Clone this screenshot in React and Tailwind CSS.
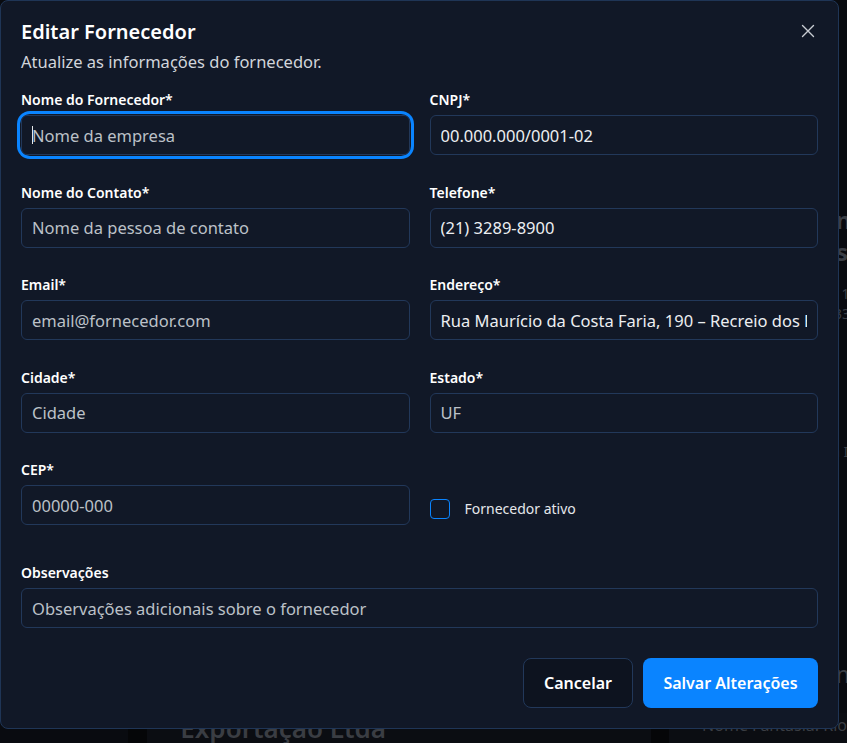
import React, { useState } from "react";

const font = { fontFamily: '"Noto Sans", "Open Sans", sans-serif' };

const inputClass =
  "block h-10 w-full rounded-md border border-[#22385a] bg-[#111827] px-[10px] text-[16.5px] text-[#eceef1] placeholder:text-[#bcc1c8] focus:outline-none";

const Field = ({ label, placeholder, value, focused }) => (
  <div>
    <label className="mb-[5px] block text-sm font-semibold leading-5 text-white">
      {label}
    </label>
    {focused ? (
      <div className="rounded-[9px] ring-[3px] ring-[#0a84ff] ring-offset-1 ring-offset-[#111827]">
        <div className="relative">
          <input className={inputClass} placeholder={placeholder} defaultValue={value} />
          <span className="absolute left-[11px] top-[11px] h-[18px] w-px bg-[#e5e7eb]" />
        </div>
      </div>
    ) : (
      <input className={inputClass} placeholder={placeholder} defaultValue={value} />
    )}
  </div>
);

const XIcon = () => (
  <svg width="14" height="14" viewBox="0 0 14 14" fill="none">
    <path d="M1.5 1.5L12.5 12.5M12.5 1.5L1.5 12.5" stroke="#c9cdd3" strokeWidth="1.4" strokeLinecap="round" />
  </svg>
);

const App = () => {
  const [active, setActive] = useState(false);

  return (
    <div className="relative h-[743px] w-[847px] overflow-hidden bg-[#090b10]" style={font}>
      {/* página ao fundo */}
      <div className="flex h-full flex-col">
        <div className="flex flex-col pl-[806px] pt-[204px] text-[#3b3f46]">
          <p className="text-2xl font-bold leading-8 whitespace-nowrap">Centro</p>
          <p className="text-2xl font-bold leading-8 whitespace-nowrap">Postos</p>
          <p className="mt-4 text-sm whitespace-nowrap">CNPJ 12.345</p>
          <p className="text-sm whitespace-nowrap">(21) 3333</p>
          <p className="mt-[118px] text-sm whitespace-nowrap">Nova Iguaçu</p>
          <p className="mt-[196px] text-2xl leading-8 whitespace-nowrap">Comércio</p>
        </div>
        <div className="mt-auto flex h-[30px] pl-[128px]">
          <div className="w-[20px] bg-[#050608]" />
          <div className="w-[521px] bg-[#0b0d12] pl-[33px]">
            <p className="text-[26px] font-semibold leading-[30px] text-[#3a3d43] whitespace-nowrap">
              Exportação Ltda
            </p>
          </div>
          <div className="w-[19px] bg-[#050608]" />
          <div className="flex-1 bg-[#0b0d12] pl-[33px]">
            <p className="text-base leading-6 text-[#3a3d43] whitespace-nowrap">Nome Fantasia: Rio</p>
          </div>
        </div>
      </div>

      {/* diálogo */}
      <div className="absolute left-0 top-0 flex h-[729px] w-[839px] flex-col rounded-lg border border-[#1f3556] bg-[#111827] px-5 pb-5 pt-[17px]">
        <div className="flex items-start justify-between">
          <div className="flex flex-col gap-1">
            <h2 className="text-xl font-semibold leading-7 text-white">Editar Fornecedor</h2>
            <p className="text-[16.5px] leading-6 text-[#d1d5db]">Atualize as informações do fornecedor.</p>
          </div>
          <button className="mr-[3px] mt-[6px]">
            <XIcon />
          </button>
        </div>

        <form className="mt-4 flex flex-1 flex-col" onSubmit={(e) => e.preventDefault()}>
          <div className="grid grid-cols-2 gap-x-5 gap-y-[27.5px]">
            <Field label="Nome do Fornecedor*" placeholder="Nome da empresa" focused />
            <Field label="CNPJ*" value="00.000.000/0001-02" />
            <Field label="Nome do Contato*" placeholder="Nome da pessoa de contato" />
            <Field label="Telefone*" value="(21) 3289-8900" />
            <Field label="Email*" placeholder="email@fornecedor.com" />
            <Field label="Endereço*" value="Rua Maurício da Costa Faria, 190 – Recreio dos Bandeirantes" />
            <Field label="Cidade*" placeholder="Cidade" />
            <Field label="Estado*" placeholder="UF" />
            <Field label="CEP*" placeholder="00000-000" />
            <label className="flex items-end pb-[6px]">
              <span className="flex items-center">
                <button
                  type="button"
                  onClick={() => setActive((v) => !v)}
                  className="h-5 w-5 rounded-[4px] border-[1.5px] border-[#0a84ff] bg-transparent"
                />
                <span className="ml-[15px] text-sm text-[#e5e7eb]">Fornecedor ativo</span>
              </span>
            </label>
          </div>

          <div className="mt-[38px]">
            <Field label="Observações" placeholder="Observações adicionais sobre o fornecedor" />
          </div>

          <div className="mt-auto flex justify-end gap-[10px]">
            <button
              type="button"
              className="h-[50px] w-[110px] rounded-lg border border-[#22385a] bg-[#0d131f] text-base font-semibold text-white"
            >
              Cancelar
            </button>
            <button
              type="submit"
              className="h-[50px] w-[175px] rounded-lg bg-[#0a84ff] text-base font-semibold text-white"
            >
              Salvar Alterações
            </button>
          </div>
        </form>
      </div>
    </div>
  );
};

export default App;
